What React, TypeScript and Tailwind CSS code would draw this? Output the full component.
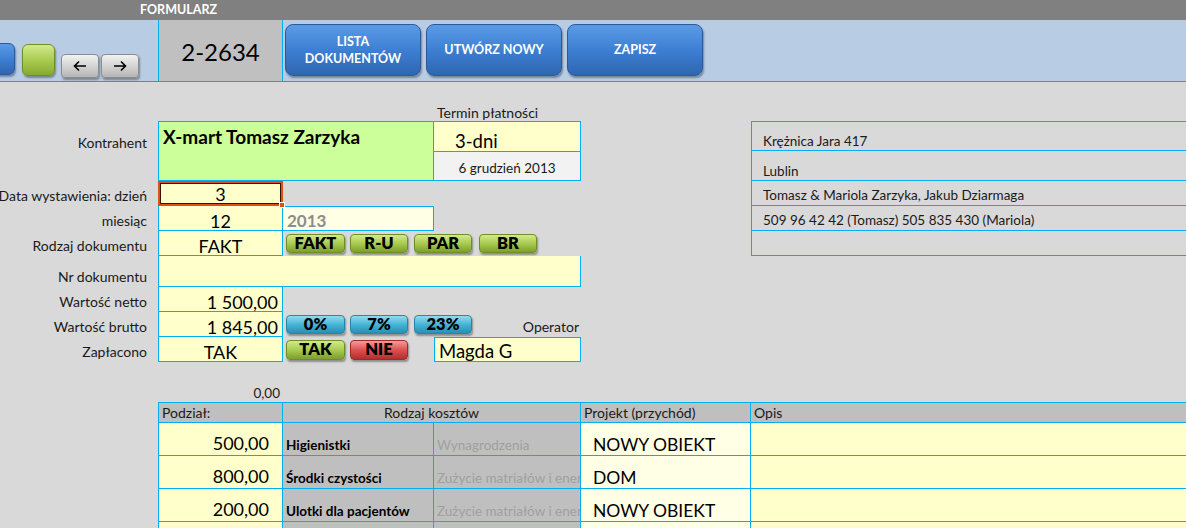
import React from "react";

const B = "border-[#00b0f0]";

function Shape({
  children,
  kind,
  className = "",
}: {
  children?: React.ReactNode;
  kind: "green" | "cyan" | "red" | "gray" | "blue";
  className?: string;
}) {
  const styles: Record<string, string> = {
    green:
      "bg-linear-to-b from-[#d3ea8c] via-[#a9cb4f] to-[#7d9f2c] border border-[#6e8f24] text-black",
    cyan: "bg-linear-to-b from-[#8fdcf0] via-[#45b4d6] to-[#2a8fb3] border border-[#2a86a8] text-black",
    red: "bg-linear-to-b from-[#f39a9a] via-[#dd4f4f] to-[#b22e2e] border border-[#9e2a2a] text-black",
    gray: "bg-linear-to-b from-[#f2f2f2] via-[#d4d4d4] to-[#b5b5b5] border border-[#8c8c8c] text-black",
    blue: "bg-linear-to-b from-[#5b9be6] via-[#3d7fd3] to-[#2f66b0] border border-[#2a5a9c] text-white",
  };
  return (
    <div
      className={`shrink-0 flex items-center justify-center rounded-[4px] shadow-[1px_2px_2px_rgba(0,0,0,0.35)] ${styles[kind]} ${className}`}
    >
      {children}
    </div>
  );
}

function SmallBtn({ kind, children, className = "" }: { kind: "green" | "cyan" | "red"; children: React.ReactNode; className?: string }) {
  return (
    <Shape kind={kind} className={`h-[19px] w-[58px] text-[16.5px] font-extrabold leading-none ${className}`}>
      {children}
    </Shape>
  );
}

const label = "w-[158px] shrink-0 pr-[11px] flex items-center justify-end pt-[4px] whitespace-nowrap";
const panel = `flex-1 border-l border-b ${B} flex items-center pl-[11px] pt-[5px] text-[13.5px] whitespace-nowrap`;
const valCenter = `w-[125px] bg-[#ffffcc] border-x border-b ${B} flex items-center justify-center pt-[6px] text-[18px] leading-none text-black`;
const valRight = `w-[125px] bg-[#ffffcc] border-x border-b ${B} flex items-center justify-end pr-[4px] pt-[5px] text-[18px] leading-none text-black`;

export default function App() {
  return (
    <div className="w-[1186px] h-[528px] overflow-hidden bg-[#d9d9d9] font-['Lato','Liberation_Sans',sans-serif] text-[14px] text-[#1a1a1a]">
      {/* Title bar */}
      <div className="h-[20px] bg-[#808080] flex items-center pl-[140px]">
        <span className="text-white font-bold text-[12.5px] leading-none">FORMULARZ</span>
      </div>

      {/* Toolbar */}
      <div className="h-[62px] bg-[#b8cce4] border-b border-[#7f7f7f] flex">
        <div className="w-[158px] flex items-start overflow-hidden">
          <Shape kind="blue" className="w-[32px] h-[32px] -ml-[17px] mt-[23px] rounded-[6px]" />
          <Shape kind="green" className="w-[33px] h-[32px] ml-[7px] mt-[24px] rounded-[6px] from-[#c6e46f] via-[#a6c94a] to-[#86aa30]" />
          <Shape kind="gray" className="w-[38px] h-[24px] ml-[6px] mt-[34px] rounded-[4px]">
            <svg width="14" height="12" viewBox="0 0 14 12">
              <path d="M13 6H2M6 1.5L1.5 6L6 10.5" stroke="#000" strokeWidth="1.6" fill="none" />
            </svg>
          </Shape>
          <Shape kind="gray" className="w-[38px] h-[24px] ml-[2px] mt-[34px] rounded-[4px]">
            <svg width="14" height="12" viewBox="0 0 14 12">
              <path d="M1 6H12M8 1.5L12.5 6L8 10.5" stroke="#000" strokeWidth="1.6" fill="none" />
            </svg>
          </Shape>
        </div>
        <div className={`w-[125px] bg-[#c0c0c0] border-x ${B} flex items-center justify-center pt-[3px] text-[24px] text-black`}>
          2-2634
        </div>
        <div className="flex items-start gap-[5px] ml-[2px] mt-[4px]">
          <Shape kind="blue" className="w-[136px] h-[52px] rounded-[8px] text-[12.5px] font-bold leading-[17px] text-center">
            LISTA
            <br />
            DOKUMENTÓW
          </Shape>
          <Shape kind="blue" className="w-[136px] h-[52px] rounded-[8px] text-[12.5px] font-bold">
            UTWÓRZ NOWY
          </Shape>
          <Shape kind="blue" className="w-[136px] h-[52px] rounded-[8px] text-[12.5px] font-bold">
            ZAPISZ
          </Shape>
        </div>
      </div>

      {/* Termin label row */}
      <div className="h-[39px] flex items-end">
        <div className="ml-[437px] text-[14px] leading-[17px]">Termin płatności</div>
      </div>

      {/* Kontrahent row */}
      <div className="h-[60px] flex">
        <div className="w-[158px] pr-[11px] pt-[11px] text-right">Kontrahent</div>
        <div className={`w-[276px] bg-[#ccff99] border ${B} pl-[4px] pt-[3px] text-[19px] font-bold text-black leading-[24px]`}>
          X-mart Tomasz Zarzyka
        </div>
        <div className={`w-[147px] flex flex-col border-y border-r ${B}`}>
          <div className={`h-[30px] bg-[#ffffcc] border-b ${B} pl-[21px] pt-[9px] flex items-center text-[18.5px] leading-none text-black`}>3-dni</div>
          <div className="flex-1 bg-[#f2f2f2] flex items-center justify-center pt-[4px] text-[13.5px]">6 grudzień 2013</div>
        </div>
        <div className="w-[170px]" />
        <div className={`flex-1 flex flex-col border-l border-t ${B}`}>
          <div className={`h-[29px] border-b ${B} flex items-center pl-[11px] pt-[11px] text-[13.5px] leading-none`}>Krężnica Jara 417</div>
          <div className={`h-[30px] border-b ${B} flex items-center pl-[11px] pt-[12px] text-[13.5px] leading-none`}>Lublin</div>
        </div>
      </div>

      {/* Data wystawienia */}
      <div className="h-[25px] flex">
        <div className={label}>Data wystawienia: dzień</div>
        <div className="relative w-[125px] bg-[#ffffcc] border-2 border-[#d9501c] shadow-[inset_0_0_0_1px_#3a1200] flex items-center justify-center pt-[1px] text-[18px] leading-none text-black">
          3
          <div className="absolute -right-[4px] -bottom-[4px] w-[6px] h-[6px] bg-[#d9501c] border border-white" />
        </div>
        <div className="w-[468px]" />
        <div className={panel}>Tomasz &amp; Mariola Zarzyka, Jakub Dziarmaga</div>
      </div>

      {/* miesiąc */}
      <div className="h-[25px] flex">
        <div className={label}>miesiąc</div>
        <div className={valCenter}>12</div>
        <div className={`w-[151px] bg-[#ffffe5] border-t border-r border-b ${B} flex items-center pl-[4px] pt-[4px] text-[17px] leading-none font-bold text-[#8c8c8c]`}>
          2013
        </div>
        <div className="w-[317px]" />
        <div className={panel}>509 96 42 42 (Tomasz) 505 835 430 (Mariola)</div>
      </div>

      {/* Rodzaj dokumentu */}
      <div className="h-[25px] flex">
        <div className={label}>Rodzaj dokumentu</div>
        <div className={valCenter}>FAKT</div>
        <div className="w-[468px] flex items-center">
          <SmallBtn kind="green" className="ml-[3px] w-[59px]">FAKT</SmallBtn>
          <SmallBtn kind="green" className="ml-[5px]">R-U</SmallBtn>
          <SmallBtn kind="green" className="ml-[6px]">PAR</SmallBtn>
          <SmallBtn kind="green" className="ml-[7px]">BR</SmallBtn>
        </div>
        <div className={`flex-1 border-l border-b ${B}`} />
      </div>

      {/* Nr dokumentu */}
      <div className="h-[31px] flex">
        <div className="w-[158px] shrink-0 pr-[11px] flex items-center justify-end pt-[9px] whitespace-nowrap">Nr dokumentu</div>
        <div className={`w-[423px] bg-[#ffffcc] border-x border-b ${B}`} />
      </div>

      {/* Wartość netto */}
      <div className="h-[25px] flex">
        <div className={label}>Wartość netto</div>
        <div className={valRight}>1 500,00</div>
      </div>

      {/* Wartość brutto */}
      <div className="h-[25px] flex">
        <div className={label}>Wartość brutto</div>
        <div className={valRight}>1 845,00</div>
        <div className="w-[151px] shrink-0 flex items-center">
          <SmallBtn kind="cyan" className="ml-[3px] w-[59px]">0%</SmallBtn>
          <SmallBtn kind="cyan" className="ml-[5px]">7%</SmallBtn>
          <SmallBtn kind="cyan" className="ml-[6px]">23%</SmallBtn>
        </div>
        <div className="w-[147px] flex items-end justify-end pr-[2px] pb-[0px]">Operator</div>
      </div>

      {/* Zapłacono */}
      <div className="h-[25px] flex">
        <div className={`${label} pt-[3px]`}>Zapłacono</div>
        <div className={valCenter}>TAK</div>
        <div className="w-[151px] shrink-0 flex items-center">
          <SmallBtn kind="green" className="ml-[3px] w-[59px] h-[20px]">TAK</SmallBtn>
          <SmallBtn kind="red" className="ml-[5px] h-[20px]">NIE</SmallBtn>
        </div>
        <div className={`w-[147px] bg-[#ffffcc] border ${B} flex items-center pl-[4px] pt-[4px] text-[18.5px] leading-none text-black`}>Magda G</div>
      </div>

      {/* 0,00 */}
      <div className="h-[40px] flex">
        <div className="w-[283px] flex items-end justify-end pr-[3px] pb-[2px] text-[13.5px] leading-none">0,00</div>
      </div>

      {/* Table header */}
      <div className="h-[21px] flex">
        <div className="w-[158px]" />
        <div className={`flex-1 flex bg-[#bfbfbf] border-t border-b ${B}`}>
          <div className={`w-[125px] border-x ${B} flex items-center pl-[3px]`}>Podział:</div>
          <div className={`w-[298px] border-r ${B} flex items-center justify-center`}>Rodzaj kosztów</div>
          <div className={`w-[170px] border-r ${B} flex items-center pl-[3px]`}>Projekt (przychód)</div>
          <div className="flex-1 flex items-center pl-[3px]">Opis</div>
        </div>
      </div>

      {/* Table rows */}
      {[
        ["500,00", "Higienistki", "Wynagrodzenia", "NOWY OBIEKT"],
        ["800,00", "Środki czystości", "Zużycie matriałów i energii", "DOM"],
        ["200,00", "Ulotki dla pacjentów", "Zużycie matriałów i energii", "NOWY OBIEKT"],
        ["", "", "", ""],
      ].map((r, i) => (
        <div key={i} className="h-[33px] flex">
          <div className="w-[158px]" />
          <div className={`flex-1 flex border-b ${B}`}>
            <div className={`w-[125px] bg-[#ffffcc] border-x ${B} flex items-end justify-end pr-[13px] pb-[3px] text-[18px] leading-none text-black`}>
              {r[0]}
            </div>
            <div className={`w-[151px] bg-[#bfbfbf] border-r ${B} flex items-end pl-[3px] pb-[3px] text-[13.5px] leading-none font-bold text-black whitespace-nowrap overflow-hidden`}>
              {r[1]}
            </div>
            <div className={`w-[147px] bg-[#bfbfbf] border-r ${B} flex items-end pl-[3px] pb-[3px] text-[13.5px] leading-none text-[#a0a0a0] whitespace-nowrap overflow-hidden`}>
              {r[2]}
            </div>
            <div className={`w-[170px] bg-[#ffffe5] border-r ${B} flex items-end pl-[12px] pb-[2px] text-[17.5px] leading-none text-black whitespace-nowrap`}>
              {r[3]}
            </div>
            <div className="flex-1 bg-[#ffffcc]" />
          </div>
        </div>
      ))}
    </div>
  );
}
